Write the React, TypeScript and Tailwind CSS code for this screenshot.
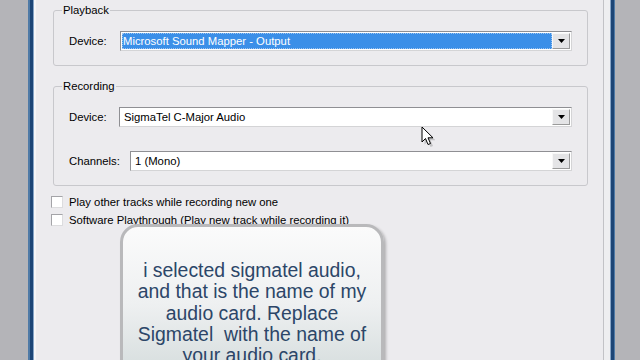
import React from 'react';

function DropButton() {
  return (
    <div className="w-[18px] h-full flex items-center justify-center bg-[#e4e4e6] border border-[#f8f8f8] border-r-[#9a9a9a] border-b-[#9a9a9a]">
      <svg width="7" height="4" viewBox="0 0 7 4">
        <path d="M0 0 H7 L3.5 4 Z" fill="#000" />
      </svg>
    </div>
  );
}

function Combo({ value, selected }: { value: string; selected?: boolean }) {
  return (
    <div className="flex-1 h-[20px] flex items-stretch bg-white border border-[#8f8f93] border-r-[#d4d4d6] border-b-[#d4d4d6] p-[1px]">
      <div
        className={
          selected
            ? 'flex-1 flex items-center pl-[1px] bg-[#3b8fe8] text-white outline outline-1 outline-dotted outline-[#9cc4f0] -outline-offset-1'
            : 'flex-1 flex items-center pl-[3px] text-black'
        }
      >
        {value}
      </div>
      <DropButton />
    </div>
  );
}

function Group({ title, children }: { title: string; children: React.ReactNode }) {
  return (
    <fieldset className="border border-[#c8c8cc] rounded-[3px] p-0 m-0">
      <legend className="ml-[8px] px-[1px] leading-[14px] text-black">{title}</legend>
      <div className="pl-[15px] pr-[15px] pt-[14px] pb-[14px]">{children}</div>
    </fieldset>
  );
}

function Check({ label }: { label: string }) {
  return (
    <div className="h-[18px] flex items-center gap-[6px]">
      <div className="w-[12px] h-[12px] bg-white border border-[#a4a4a8] border-r-[#dcdcde] border-b-[#dcdcde]" />
      <span className="text-black whitespace-nowrap">{label}</span>
    </div>
  );
}

export default function App() {
  return (
    <div className="relative w-[640px] h-[360px] overflow-hidden flex bg-[#b5b5b9] font-['Liberation_Sans',Arial,sans-serif] text-[11.3px]">
      {/* left window edge */}
      <div className="w-[28px] bg-[#b4b4b8]" />
      <div className="w-[2px] bg-[#4f7aa6]" />
      <div className="w-[3px] bg-[#1c4576]" />
      <div className="w-[1px] bg-[#86a4c6]" />
      <div className="w-[2px] bg-[#f5f5f7]" />

      {/* dialog body */}
      <div className="w-[567px] bg-[#ecebee] pl-[17px] pr-[15px] pt-[3px]">
        <Group title="Playback">
          <div className="flex items-center">
            <span className="w-[51px] text-black">Device:</span>
            <Combo value="Microsoft Sound Mapper - Output" selected />
          </div>
        </Group>

        <div className="mt-[13px]">
          <Group title="Recording">
            <div className="flex items-center">
              <span className="w-[50px] text-black">Device:</span>
              <Combo value="SigmaTel C-Major Audio" />
            </div>
            <div className="flex items-center mt-[24px]">
              <span className="w-[61px] text-black">Channels:</span>
              <Combo value="1 (Mono)" />
            </div>
          </Group>
        </div>

        <div className="mt-[7px] ml-[-2px] flex flex-col">
          <Check label="Play other tracks while recording new one" />
          <Check label="Software Playthrough (Play new track while recording it)" />
        </div>
      </div>

      {/* right window edge */}
      <div className="w-[1px] bg-[#c2c2c6]" />
      <div className="w-[6px] bg-[#eeeef0]" />
      <div className="w-[1px] bg-[#86a4c6]" />
      <div className="w-[3px] bg-[#1c4576]" />
      <div className="w-[1px] bg-[#4f7aa6]" />
      <div className="w-[25px] bg-[#b4b4b8]" />

      {/* mouse cursor */}
      <svg className="absolute left-[421px] top-[126px]" width="14" height="22" viewBox="0 0 14 22">
        <path d="M2 2 V17 L5.5 13.5 L8 19.5 L10.5 18.5 L8 12.8 H13 Z" fill="#7a7a7a" opacity="0.35" transform="translate(1.5 1.5)" />
        <path d="M1 1 V16 L4.5 12.5 L7 18.5 L9.5 17.5 L7 11.8 H12 Z" fill="#fff" stroke="#000" strokeWidth="1" strokeLinejoin="round" />
      </svg>

      {/* annotation callout */}
      <div className="absolute left-[120px] top-[224px] w-[264px] h-[160px] rounded-[18px] border-[3px] border-[#b9b9bb] shadow-[2px_2px_3px_rgba(0,0,0,0.25)] bg-gradient-to-b from-[#fbfbfb] via-[#eef0f1] to-[#d3dbdb] pt-[33px] text-center font-['Liberation_Sans',Arial,sans-serif] text-[19.4px] leading-[21.3px] text-[#2c4668]">
        i selected sigmatel audio,
        <br />
        and that is the name of my
        <br />
        audio card. Replace
        <br />
        Sigmatel&nbsp; with the name of
        <br />
        your audio card.
      </div>
    </div>
  );
}
